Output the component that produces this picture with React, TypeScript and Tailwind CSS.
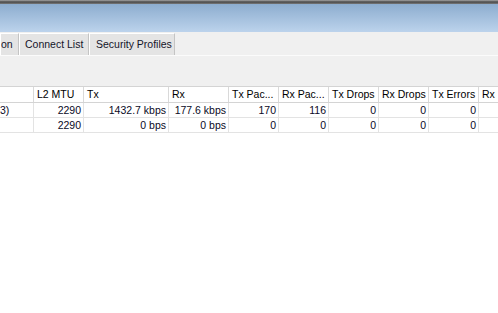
import React from 'react';

const cols = [
    { key: 'name', label: '', w: 'w-[34px]', align: 'left' },
    { key: 'mtu', label: 'L2 MTU', w: 'w-[50px]', align: 'right' },
    { key: 'tx', label: 'Tx', w: 'w-[85px]', align: 'right' },
    { key: 'rx', label: 'Rx', w: 'w-[60px]', align: 'right' },
    { key: 'txp', label: 'Tx Pac...', w: 'w-[50px]', align: 'right' },
    { key: 'rxp', label: 'Rx Pac...', w: 'w-[50px]', align: 'right' },
    { key: 'txd', label: 'Tx Drops', w: 'w-[50px]', align: 'right' },
    { key: 'rxd', label: 'Rx Drops', w: 'w-[50px]', align: 'right' },
    { key: 'txe', label: 'Tx Errors', w: 'w-[50px]', align: 'right' },
    { key: 'rxe', label: 'Rx', w: 'w-[50px]', align: 'right' },
];

const rows: Record<string, string>[] = [
    { name: '3)', mtu: '2290', tx: '1432.7 kbps', rx: '177.6 kbps', txp: '170', rxp: '116', txd: '0', rxd: '0', txe: '0', rxe: '' },
    { name: '', mtu: '2290', tx: '0 bps', rx: '0 bps', txp: '0', rxp: '0', txd: '0', rxd: '0', txe: '0', rxe: '' },
];

const tabs = [
    { label: 'on', w: 'w-[19px]', pl: 'pl-0' },
    { label: 'Connect List', w: 'w-[70px]', pl: 'pl-[5px]' },
    { label: 'Security Profiles', w: 'w-[86px]', pl: 'pl-[6px]' },
];

export default function App() {
    return (
        <div className="w-[498px] h-[313px] overflow-hidden bg-white flex flex-col text-[10.5px] leading-none" style={{ fontFamily: '"Liberation Sans", Arial, sans-serif' }}>
            {/* window frame edge */}
            <div className="h-[4px] shrink-0 bg-gradient-to-b from-[#a8a8a8] via-[#4a4a4a] to-[#7a7a7a]" />
            {/* title bar */}
            <div className="h-[28px] shrink-0 bg-gradient-to-b from-[#8dadcf] to-[#bcd3ec]" />

            {/* tab strip */}
            <div className="h-[23px] shrink-0 bg-[#f0f0f0] flex items-end">
                <div className="flex h-[22px]">
                    {tabs.map((t) => (
                        <div
                            key={t.label}
                            className={`${t.w} ${t.pl} h-full flex items-center bg-[#e4e4e4] border-l border-l-white border-r border-r-[#c4c4c4] border-t border-t-white text-[#14142a] whitespace-nowrap overflow-hidden`}
                        >
                            {t.label}
                        </div>
                    ))}
                </div>
            </div>
            <div className="h-[1px] shrink-0 bg-[#fbfbfb]" />

            {/* toolbar area */}
            <div className="h-[30px] shrink-0 bg-[#f0f0f0]" />

            {/* table */}
            <div className="flex-1 bg-white">
                <div className="flex h-[17px] border-t border-t-[#d4d4d4] border-b border-b-[#d4d4d4] bg-white">
                    {cols.map((c) => (
                        <div key={c.key} className={`${c.w} shrink-0 h-full flex items-center pl-[3px] border-r border-r-[#d9d9d9] whitespace-nowrap overflow-hidden text-black`}>
                            {c.label}
                        </div>
                    ))}
                </div>
                {rows.map((r, i) => (
                    <div key={i} className="flex h-[15px] border-b border-b-[#e3e3e3]">
                        {cols.map((c) => (
                            <div
                                key={c.key}
                                className={`${c.w} shrink-0 h-full flex items-center ${c.align === 'right' ? 'justify-end pr-[2px]' : 'justify-start pl-0'} border-r border-r-[#e3e3e3] whitespace-nowrap overflow-hidden text-[#0a0a26]`}
                            >
                                {r[c.key]}
                            </div>
                        ))}
                    </div>
                ))}
            </div>
        </div>
    );
}
